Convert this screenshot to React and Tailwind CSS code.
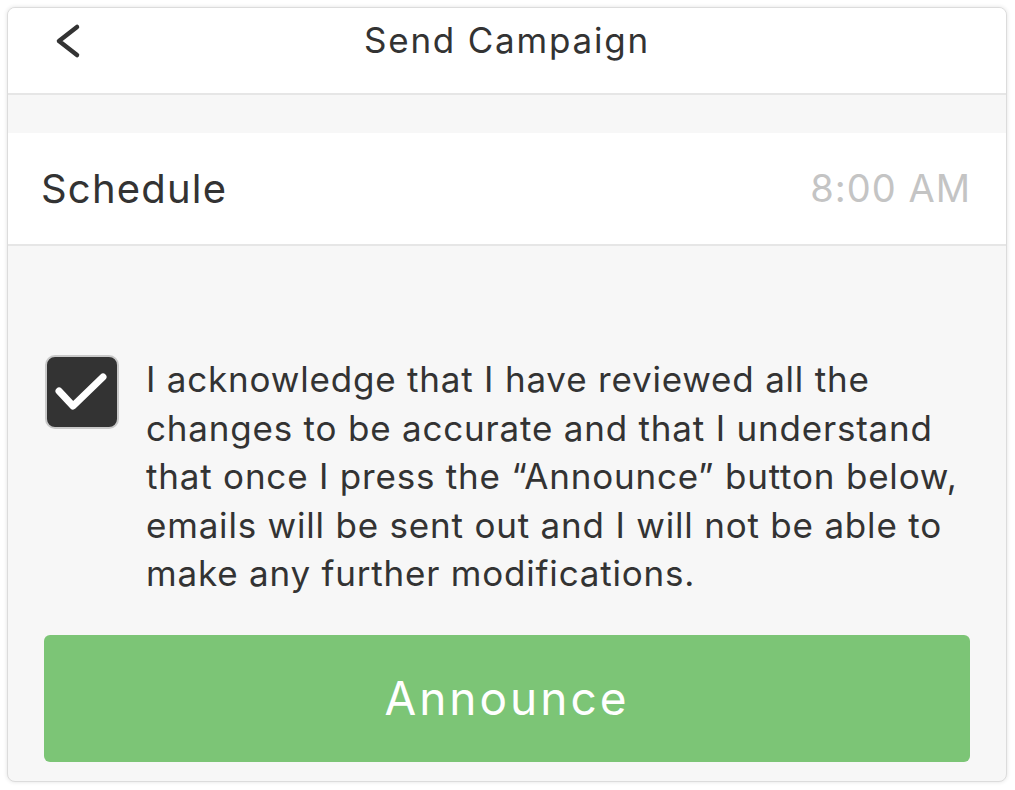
import { useState } from 'react';

const font = { fontFamily: 'Inter, Roboto, "Liberation Sans", sans-serif' };

export default function App() {
  const [agreed, setAgreed] = useState(true);

  return (
    <div className="min-h-[790px] w-[1015px] bg-white p-[7px]" style={font}>
      <div className="flex h-[775px] w-[1000px] flex-col overflow-hidden rounded-lg border border-[#dcdcdc] bg-[#f7f7f7] shadow-[0_0_4px_rgba(0,0,0,0.12)]">
        {/* Header */}
        <div className="relative flex h-[87px] shrink-0 items-center justify-center border-b-2 border-[#e6e6e6] bg-white pb-[21px]">
          <button className="absolute left-[45px] top-[14px]">
            <svg width="34" height="40" viewBox="0 0 34 40" fill="none">
              <path d="M24 5 L6 19 L24 33" stroke="#333" strokeWidth="4.5" strokeLinecap="round" strokeLinejoin="round" />
            </svg>
          </button>
          <h1 className="text-[35px] tracking-[1.8px] text-[#333]">Send Campaign</h1>
        </div>

        <div className="h-[38px] shrink-0" />

        {/* Schedule row */}
        <div className="flex h-[113px] shrink-0 items-center justify-between border-b-2 border-[#e6e6e6] bg-white pl-[33px] pr-[35px]">
          <span className="text-[40px] tracking-[1.2px] text-[#333]">Schedule</span>
          <span className="text-[38px] tracking-[1px] text-[#c4c4c4]">8:00 AM</span>
        </div>

        {/* Acknowledge */}
        <div className="flex flex-1 flex-col px-[36px]">
          <label className="mt-[109px] flex cursor-pointer items-start gap-[27px]">
            <span
              onClick={() => setAgreed(!agreed)}
              className="ml-[1px] flex h-[74px] w-[74px] shrink-0 items-center justify-center rounded-[10px] border-2 border-[#c9c9c9] bg-[#333]"
            >
              {agreed && (
                <svg width="70" height="70" viewBox="0 0 70 70" fill="none">
                  <path d="M12 34 L26 49 L56 20" stroke="#fff" strokeWidth="7" strokeLinecap="round" strokeLinejoin="round" />
                </svg>
              )}
            </span>
            <p className="text-[35px] leading-[48.5px] tracking-[0.8px] text-[#333]">
              I acknowledge that I have reviewed all the changes to be accurate and that I understand that once I press the “Announce” button below, emails will be sent out and I will not be able to make any further modifications.
            </p>
          </label>

          <button className="mt-[37px] flex h-[127px] w-full items-center justify-center rounded-md bg-[#7cc576] text-[46px] tracking-[3px] text-white">
            Announce
          </button>
        </div>
      </div>
    </div>
  );
}
